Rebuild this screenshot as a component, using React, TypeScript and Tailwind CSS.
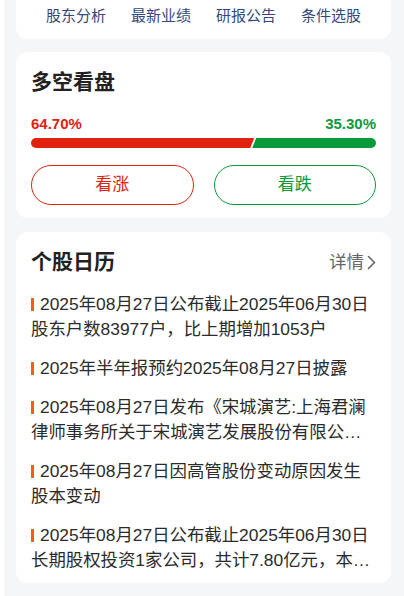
import React from 'react';

const FONT = '[font-family:"Liberation_Sans","Noto_Sans_CJK_SC",sans-serif]';

const NAV_ITEMS = ['股东分析', '最新业绩', '研报公告', '条件选股'];

const CALENDAR_ITEMS = [
  '2025年08月27日公布截止2025年06月30日股东户数83977户，比上期增加1053户',
  '2025年半年报预约2025年08月27日披露',
  '2025年08月27日发布《宋城演艺:上海君澜律师事务所关于宋城演艺发展股份有限公司2025年限制性股票激励计划相关事项的法律意见书》',
  '2025年08月27日因高管股份变动原因发生股本变动',
  '2025年08月27日公布截止2025年06月30日长期股权投资1家公司，共计7.80亿元，本期增加0.00亿元',
];

const ChevronRight: React.FC = () => (
  <svg width="9" height="15" viewBox="0 0 9 15" fill="none" className="ml-[3px]">
    <polyline points="1.5,1.5 7.5,7.5 1.5,13.5" stroke="#666" strokeWidth="1.6" strokeLinecap="round" strokeLinejoin="round" />
  </svg>
);

const App: React.FC = () => {
  const bull = 64.7;

  return (
    <div className={`min-h-screen bg-white pl-[4px] ${FONT}`}>
      <div className="min-h-screen bg-[#f5f6f8] pl-[12px] pr-[13px] pb-[13px]">
        {/* quick nav */}
        <div className="bg-white rounded-b-[12px] pt-[6px] pb-[13px] flex justify-center gap-[25px]">
          {NAV_ITEMS.map((item) => (
            <span key={item} className="text-[15px] leading-[20px] text-[#34487a]">
              {item}
            </span>
          ))}
        </div>

        {/* long / short */}
        <div className="mt-[13px] bg-white rounded-[12px] px-[15px] pt-[16px] pb-[13px]">
          <h2 className="text-[21px] leading-[28px] font-bold text-[#222]">多空看盘</h2>
          <div className="mt-[18px] flex justify-between text-[15px] leading-[20px] font-bold">
            <span className="text-[#e0220e]">64.70%</span>
            <span className="text-[#0a9a3a]">35.30%</span>
          </div>
          <div className="mt-[4px] flex h-[10px] rounded-full overflow-hidden">
            <div
              className="h-full bg-[#e0220e] [clip-path:polygon(0_0,100%_0,calc(100%-4px)_100%,0_100%)]"
              style={{ width: `${bull}%` }}
            />
            <div className="h-full flex-1 ml-[-2px] bg-[#0a9a3a] [clip-path:polygon(4px_0,100%_0,100%_100%,0_100%)]" />
          </div>
          <div className="mt-[17px] grid grid-cols-2 gap-[20px]">
            <button className="h-[40px] rounded-full border border-[#e0220e] text-[#e0220e] text-[17px]">看涨</button>
            <button className="h-[40px] rounded-full border border-[#0a9a3a] text-[#0a9a3a] text-[17px]">看跌</button>
          </div>
        </div>

        {/* calendar */}
        <div className="mt-[14px] bg-white rounded-[12px] px-[15px] pt-[16px] pb-[10px]">
          <div className="flex items-center justify-between">
            <h2 className="text-[21px] leading-[28px] font-bold text-[#222]">个股日历</h2>
            <span className="flex items-center text-[17.5px] text-[#666]">
              详情
              <ChevronRight />
            </span>
          </div>
          <ul className="mt-[16px] flex flex-col gap-[14px]">
            {CALENDAR_ITEMS.map((item, i) => (
              <li key={i} className="text-[17.4px] leading-[25px] text-[#2b2b2b] line-clamp-2">
                <span className="inline-block w-[3px] h-[13px] bg-[#ff5a14] mr-[6px] align-[-1px]" />
                {item}
              </li>
            ))}
          </ul>
        </div>
      </div>
    </div>
  );
};

export default App;
